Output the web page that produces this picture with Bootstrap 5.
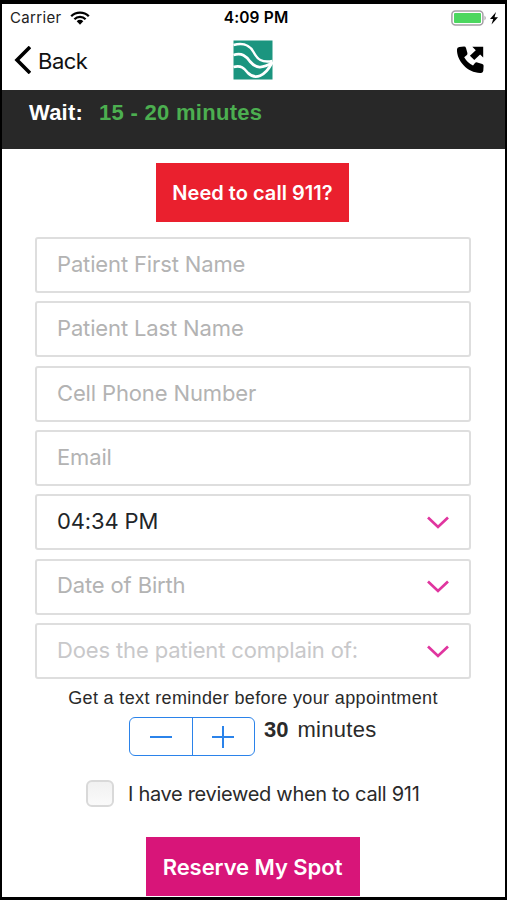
<!DOCTYPE html>
<html lang="en">
<head>
<meta charset="utf-8">
<meta name="viewport" content="width=device-width, initial-scale=1">
<title>Reserve My Spot</title>
<link href="https://cdn.jsdelivr.net/npm/bootstrap@5.3.0/dist/css/bootstrap.min.css" rel="stylesheet">
<style>
body { font-family: Inter, sans-serif; color: #2a2a2a; background: #fff; }
svg { display: block; flex: none; }
.phone { height: 900px; border: solid #000; border-width: 4px 2px 3px; }
.status { height: 28px; padding: 0 6px 0 8px; font-size: 15px; color: #222; }
.carrier { letter-spacing: .35px; }
.status-time { color: #000; font-weight: 600; font-size: 15.5px; letter-spacing: .15px; padding-left: 3px; }
.topbar { height: 58px; padding: 0 21px 3px 10px; }
.back { font-size: 22px; color: #111; gap: 7px; letter-spacing: -.5px; }
.logo { margin: 1px 0 0 9px; }
.wait { height: 59px; background: #282828; padding: 8px 27px 0; gap: 16px; font: bold 22px/30px "Liberation Sans", sans-serif; }
.wait span { letter-spacing: .2px; }
.wait .wait-time { color: #4caf50; letter-spacing: .3px; }
.block-btn { border-radius: 0; border: 0; color: #fff; font-weight: 600; height: 59px; white-space: nowrap; }
.block-btn:hover { color: #fff; }
.call-btn { background: #ea202e; width: 193px; font-size: 20px; letter-spacing: .03px; padding: 1px 0 0; margin: 14px 2px 0 0; }
.spot-btn { background: #d81579; width: 214px; font-size: 22px; letter-spacing: -.05px; padding: 1px 0 0; margin: 30px 2px 0 0; }
.fields { width: 436px; margin: 15px 0 0 33px; gap: 8.35px; }
.field { height: 56px; border: 2px solid #dedede; border-radius: 3px; padding: 0 20px 2px; font-size: 22px; color: #b3b3b3; background: #fff; box-shadow: none; letter-spacing: -.14px; }
input.field::placeholder { color: #b3b3b3; opacity: 1; }
.chev { margin: 3px 0 0; }
.field-faint { color: #c8c8ca; }
.reminder { font: 18px/26px "Liberation Sans", sans-serif; letter-spacing: .36px; margin: 6px 1px 0 0; }
.stepper { width: 126px; height: 39px; border: 1.5px solid #2b83ea; border-radius: 6px; overflow: hidden; }
.step { border: 0; border-radius: 0; padding: 0; }
.step + .step { border-left: 1.5px solid #2b83ea; }
.step-row { margin: 6px 0 0 127px; gap: 9px; }
.minutes { font: 22px/26px "Liberation Sans", sans-serif; gap: 9px; }
.minutes span { letter-spacing: .3px; }
.review { margin: 24px 0 0 84px; gap: 14px; font-size: 20px; letter-spacing: -.31px; height: 27px; }
.review .form-check-input { width: 28px; height: 27px; border: 2px solid #d9d9d9; border-radius: 6px; background: linear-gradient(#f1f1f1, #fafafa); }
</style>
</head>
<body>
<main class="phone d-flex flex-column overflow-hidden">
  <div class="status d-flex align-items-center">
    <div class="col d-flex align-items-center gap-2">
      <span class="carrier">Carrier</span>
      <svg width="20" height="14" viewBox="0 0 20 14" fill="none" stroke="#000" stroke-width="2.3"><path d="M1.2 5.2a12.4 12.4 0 0 1 17.6 0M4.4 8.2a8 8 0 0 1 11.2 0"/><path d="M6.7 10.2a4.7 4.7 0 0 1 6.6 0L10 13.7z" fill="#000" stroke="none"/></svg>
    </div>
    <span class="status-time">4:09 PM</span>
    <div class="col d-flex justify-content-end align-items-center">
      <svg width="48" height="16" viewBox="0 0 48 16"><rect x=".9" y=".9" width="31" height="14" rx="3.5" fill="#fff" stroke="#a5a0a5" stroke-width="1.5"/><rect x="3" y="3" width="27" height="10" rx="1" fill="#4cd75f"/><path d="M33.5 5.5q2.5 2.5 0 5z" fill="#a5a0a5"/><path d="M45 2l-6 7h3.200l-1.700 5.500 6.500-7.300h-3.500z" fill="#000"/></svg>
    </div>
  </div>

  <nav class="topbar d-flex align-items-center">
    <a class="back col d-flex align-items-center text-decoration-none" href="#">
      <svg width="19" height="28" viewBox="0 0 19 28" fill="none" stroke="#000" stroke-width="3.600"><path d="M18 1L5 14l13 13"/></svg>
      <span class="pt-1">Back</span>
    </a>
    <svg class="logo" width="40" height="40" viewBox="0 0 40 40"><path fill="#1b957f" d="M.5.500h39v39H.5z"/><g fill="none" stroke="#fff"><path stroke-width="2.400" d="M.5 5C12 2 17 6 20.500 12c4 7.500 8 11 19 9"/><path stroke-width="2.800" d="M.5 15C9 12.500 13 16 17 21.500c6 7 12 7.500 22.500 1"/><path stroke-width="2.800" d="M.5 27C8 25 11 28 15 33c7 7 17 4 24.500-11"/></g></svg>
    <div class="col d-flex justify-content-end">
      <svg width="28" height="28" viewBox="0 0 28 28"><path d="M3.300 1L8 .6Q9.500.5 10 2l1.400 5q.4 1.400-.8 2.300L8.200 11.200Q11.500 17 17 19.500l2-2.400q.9-1.100 2.300-.7l5 1.500q1.400.4 1.300 1.900l-.3 5q-.2 2-2.200 2.100C12 27.500.5 15 1 3.300Q1.100 1.200 3.300 1z"/><path d="M16.300.8H27.200v10.700l-3.100-3-5.800 5.500-4.400-4.300 5.900-5.400z"/></svg>
    </div>
  </nav>

  <div class="wait d-flex text-white"><span>Wait:</span><span class="wait-time">15 - 20 minutes</span></div>

  <button class="btn block-btn call-btn align-self-center" type="button">Need to call 911?</button>

  <form class="fields d-flex flex-column">
    <input class="form-control field" type="text" placeholder="Patient First Name" aria-label="Patient First Name">
    <input class="form-control field" type="text" placeholder="Patient Last Name" aria-label="Patient Last Name">
    <input class="form-control field" type="tel" placeholder="Cell Phone Number" aria-label="Cell Phone Number">
    <input class="form-control field" type="email" placeholder="Email" aria-label="Email">
    <div class="field d-flex align-items-center justify-content-between" role="button"><span class="text-body">04:34 PM</span>
      <svg class="chev" width="22" height="14" viewBox="0 0 22 14" fill="none" stroke="#e0359f" stroke-width="2.700"><path d="M1 1.500l10 9.500 10-9.500"/></svg></div>
    <div class="field d-flex align-items-center justify-content-between" role="button"><span>Date of Birth</span>
      <svg class="chev" width="22" height="14" viewBox="0 0 22 14" fill="none" stroke="#e0359f" stroke-width="2.700"><path d="M1 1.500l10 9.500 10-9.500"/></svg></div>
    <div class="field field-faint d-flex align-items-center justify-content-between" role="button"><span>Does the patient complain of:</span>
      <svg class="chev" width="22" height="14" viewBox="0 0 22 14" fill="none" stroke="#e0359f" stroke-width="2.700"><path d="M1 1.500l10 9.500 10-9.500"/></svg></div>
  </form>

  <div class="reminder text-center">Get a text reminder before your appointment</div>
  <div class="step-row d-flex">
    <div class="stepper d-flex">
      <button class="btn step flex-fill d-flex align-items-center justify-content-center" type="button" aria-label="Less"><svg width="22" height="22" viewBox="0 0 22 22" stroke="#2b83ea" stroke-width="2"><path d="M0 11h22"/></svg></button>
      <button class="btn step flex-fill d-flex align-items-center justify-content-center" type="button" aria-label="More"><svg width="22" height="22" viewBox="0 0 22 22" stroke="#2b83ea" stroke-width="2"><path d="M0 11h22M11 0v22"/></svg></button>
    </div>
    <div class="minutes d-flex"><b>30</b><span>minutes</span></div>
  </div>
  <label class="review d-flex align-items-center"><input class="form-check-input m-0" type="checkbox"><span>I have reviewed when to call 911</span></label>
  <button class="btn block-btn spot-btn align-self-center" type="button">Reserve My Spot</button>
</main>
<script src="https://cdn.jsdelivr.net/npm/bootstrap@5.3.0/dist/js/bootstrap.bundle.min.js"></script>
</body>
</html>
